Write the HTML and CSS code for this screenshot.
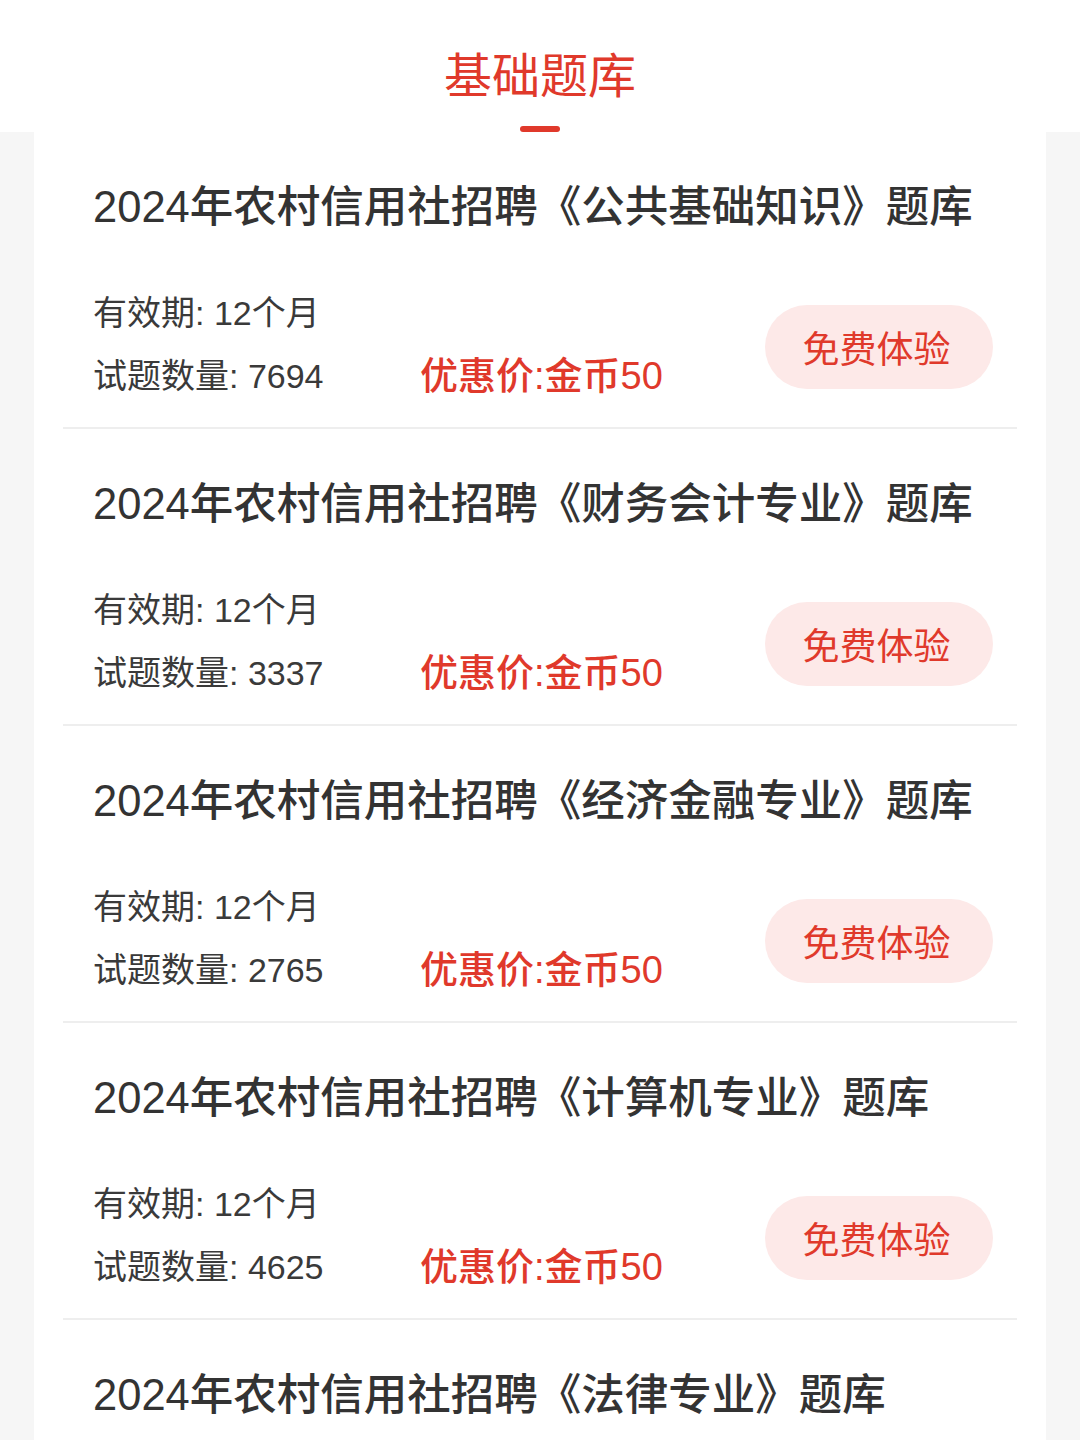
FILE: index.html
```html
<!DOCTYPE html>
<html lang="zh-CN">
<head>
<meta charset="utf-8">
<title>基础题库</title>
<link rel="stylesheet" href="styles.css">
</head>
<body>
<header class="top">
  <h1 class="top-title">基础题库</h1>
  <span class="top-bar"></span>
</header>
<main class="card">
  <div class="item">
    <div class="item-title">2024年农村信用社招聘《公共基础知识》题库</div>
    <div class="item-body">
      <div class="info">
        <div class="row">有效期: 12个月</div>
        <div class="row"><span class="count">试题数量: 7694</span><span class="price">优惠价:金币50</span></div>
      </div>
      <button class="btn">免费体验</button>
    </div>
  </div>
  <div class="item">
    <div class="item-title">2024年农村信用社招聘《财务会计专业》题库</div>
    <div class="item-body">
      <div class="info">
        <div class="row">有效期: 12个月</div>
        <div class="row"><span class="count">试题数量: 3337</span><span class="price">优惠价:金币50</span></div>
      </div>
      <button class="btn">免费体验</button>
    </div>
  </div>
  <div class="item">
    <div class="item-title">2024年农村信用社招聘《经济金融专业》题库</div>
    <div class="item-body">
      <div class="info">
        <div class="row">有效期: 12个月</div>
        <div class="row"><span class="count">试题数量: 2765</span><span class="price">优惠价:金币50</span></div>
      </div>
      <button class="btn">免费体验</button>
    </div>
  </div>
  <div class="item">
    <div class="item-title">2024年农村信用社招聘《计算机专业》题库</div>
    <div class="item-body">
      <div class="info">
        <div class="row">有效期: 12个月</div>
        <div class="row"><span class="count">试题数量: 4625</span><span class="price">优惠价:金币50</span></div>
      </div>
      <button class="btn">免费体验</button>
    </div>
  </div>
  <div class="item item-last">
    <div class="item-title">2024年农村信用社招聘《法律专业》题库</div>
  </div>
</main>
</body>
</html>
```
FILE: styles.css
```css
html, body {
  margin: 0;
  padding: 0;
}
body {
  background: #f6f6f6;
  font-family: "Liberation Sans", "Noto Sans CJK SC", sans-serif;
  color: #333;
  overflow: hidden;
}
.top {
  background: #fff;
  height: 132px;
  display: flex;
  flex-direction: column;
  align-items: center;
  box-sizing: border-box;
  padding-top: 45px;
}
.top-title {
  margin: 0;
  font-size: 48px;
  line-height: 64px;
  font-weight: 400;
  color: #e0392b;
}
.top-bar {
  display: block;
  width: 40px;
  height: 6px;
  border-radius: 3px;
  background: #e0392b;
  margin-top: 17px;
}
.card {
  background: #fff;
  margin: 0 34px;
  padding: 0 29px;
  min-height: 1400px;
}
.item {
  padding: 45px 24px 22px 30px;
  border-bottom: 2px solid #eeeeee;
}
.item-last {
  border-bottom: 0;
}
.item-title {
  font-size: 43.5px;
  line-height: 60px;
  font-weight: 500;
  color: #333;
  white-space: nowrap;
}
.item-body {
  margin-top: 42px;
  display: flex;
  align-items: center;
}
.info {
  flex: 1;
}
.row {
  display: flex;
  align-items: center;
  height: 63px;
  font-size: 34px;
  color: #3a3a3a;
  white-space: nowrap;
}
.count {
  width: 327px;
}
.price {
  font-size: 38px;
  font-weight: 500;
  color: #e0392b;
  margin-top: -2px;
}
.btn {
  width: 228px;
  height: 84px;
  border: 0;
  border-radius: 42px;
  background: #fde9e8;
  color: #e0392b;
  font-family: "Noto Sans CJK SC", sans-serif;
  font-size: 37px;
  padding: 0 5px 0 0;
  margin-top: 9px;
  flex-shrink: 0;
}
```
